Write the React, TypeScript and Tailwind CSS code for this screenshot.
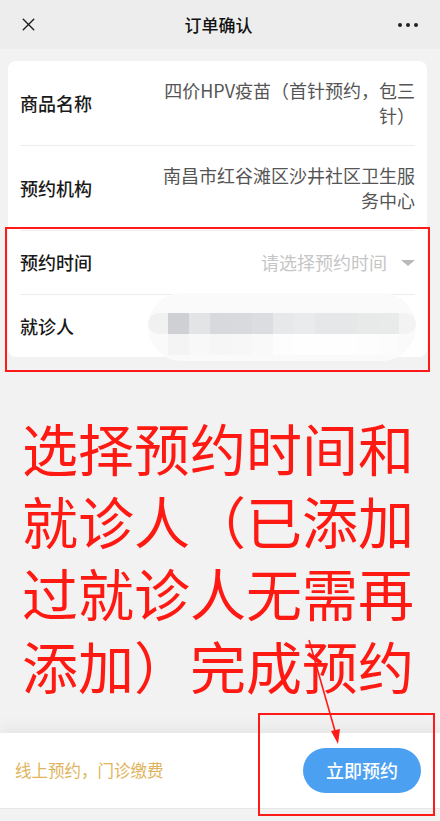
import { X } from "lucide-react";

const font = { fontFamily: '"Noto Sans CJK SC", "Noto Sans", sans-serif' };

const topBlocks = [
  "bg-[#cfd0d3]",
  "bg-[#e3e4e6]",
  "bg-[#d8d9dc]",
  "bg-[#d9dadd]",
  "bg-[#dcdde0]",
  "bg-[#e7e8ea]",
  "bg-[#eaebec]",
  "bg-[#e6e7e8]",
  "bg-[#e6e7e8]",
  "bg-[#e8e9e9]",
  "bg-[#e9eaea]",
];

const bottomBlocks = [
  "bg-[#f4f4f5]",
  "bg-[#f8f8f9]",
  "bg-[#f6f6f7]",
  "bg-[#f7f7f8]",
  "bg-[#f9f9f9]",
  "bg-[#fdfdfd]",
  "bg-[#fefefe]",
  "bg-[#fefefe]",
  "bg-[#fefefe]",
  "bg-[#fdfdfd]",
  "bg-[#fcfcfc]",
];

function BlurredName() {
  return (
    <div className="relative h-[68px] w-[268px] shrink-0 rounded-full bg-[#fafafa]">
      <div className="absolute left-0 top-[20px] h-[21px] w-[20px] rounded-l-full bg-[#f1f1f1]" />
      <div className="absolute left-[20px] top-[20px] flex flex-col">
        <div className="flex">
          {topBlocks.map((c, i) => (
            <div key={i} className={"h-[21px] w-[21px] " + c} />
          ))}
          <div className="h-[21px] w-[17px] rounded-r-full bg-[#f3f3f3]" />
        </div>
        <div className="flex">
          {bottomBlocks.map((c, i) => (
            <div key={i} className={"h-[21px] w-[21px] " + c} />
          ))}
        </div>
      </div>
    </div>
  );
}

export default function App() {
  return (
    <div
      className="relative flex h-[821px] w-[440px] flex-col overflow-hidden bg-[#f2f2f2]"
      style={font}
    >
      {/* nav bar */}
      <div className="flex h-[49px] shrink-0 items-center justify-between bg-[#ededed] px-[18px]">
        <X size={21} strokeWidth={1.6} className="text-[#1a1a1a]" />
        <div className="text-[17px] font-medium text-[#111]">订单确认</div>
        <div className="flex gap-[4px] pr-[4px]">
          <span className="h-[4px] w-[4px] rounded-full bg-[#222]" />
          <span className="h-[4px] w-[4px] rounded-full bg-[#222]" />
          <span className="h-[4px] w-[4px] rounded-full bg-[#222]" />
        </div>
      </div>

      <div className="flex flex-1 flex-col">
        {/* order card */}
        <div className="ml-[8px] mr-[13px] mt-[12px] rounded-[8px] bg-white px-[12px]">
          <div className="flex items-center justify-between border-b border-[#ececec] py-[17px]">
            <div className="text-[18px] font-medium text-[#1a1a1a]">商品名称</div>
            <div className="whitespace-nowrap text-right text-[18px] leading-[25px] text-[#555]">
              四价HPV疫苗（首针预约，包三
              <br />
              针）
            </div>
          </div>
          <div className="flex items-center justify-between border-b border-[#ececec] py-[17px]">
            <div className="text-[18px] font-medium text-[#1a1a1a]">预约机构</div>
            <div className="whitespace-nowrap text-right text-[18px] leading-[25px] text-[#555]">
              南昌市红谷滩区沙井社区卫生服
              <br />
              务中心
            </div>
          </div>
          <div className="flex h-[64px] items-center justify-between border-b border-[#ececec]">
            <div className="text-[18px] font-medium text-[#1a1a1a]">预约时间</div>
            <div className="flex items-center gap-[14px]">
              <span className="text-[18px] text-[#c6c6c6]">请选择预约时间</span>
              <span className="h-0 w-0 border-x-[7px] border-t-[6px] border-x-transparent border-t-[#b9b9b9]" />
            </div>
          </div>
          <div className="flex h-[62px] items-center justify-between">
            <div className="text-[18px] font-medium text-[#1a1a1a]">就诊人</div>
            <div className="-mr-[1px] mt-[2px]">
              <BlurredName />
            </div>
          </div>
        </div>

        {/* annotation text */}
        <div className="mt-[54px] px-[22px] text-[56px] leading-[72.5px] text-[#fe1a12]">
          选择预约时间和就诊人（已添加过就诊人无需再添加）完成预约
        </div>
      </div>

      {/* bottom bar */}
      <div className="flex h-[75px] shrink-0 items-center justify-between bg-white pl-[15px] pr-[19px] shadow-[0_-6px_14px_rgba(0,0,0,0.05)]">
        <div className="text-[16.5px] text-[#dfb45c]">线上预约，门诊缴费</div>
        <button className="h-[45px] w-[118px] rounded-full bg-[#4ca0f2] text-[18px] font-medium text-white">
          立即预约
        </button>
      </div>
      <div className="h-[13px] shrink-0 border-t border-[#e6e6e6] bg-[#f2f2f2]" />

      {/* annotation boxes and arrow */}
      <div className="absolute left-[5px] top-[227px] h-[145px] w-[425px] border-2 border-[#ff1a1a]" />
      <div className="absolute left-[258px] top-[713px] h-[103px] w-[177px] border-2 border-[#ff1a1a]" />
      <svg className="absolute left-0 top-0" width="440" height="821" viewBox="0 0 440 821">
        <line x1="309" y1="640" x2="337" y2="738" stroke="#ff1a1a" strokeWidth="1.6" />
        <path d="M331 731 L338 744 L340 729 Z" fill="#ff1a1a" />
      </svg>
    </div>
  );
}
